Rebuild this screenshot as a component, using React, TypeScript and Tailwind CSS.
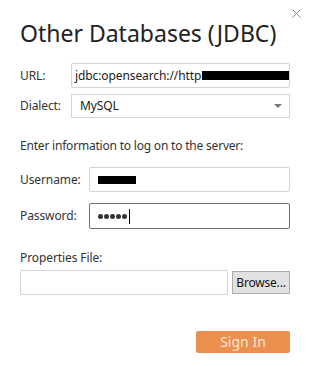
export default function App() {
  return (
    <div
      className="relative w-[311px] h-[366px] bg-white text-[#333333]"
      style={{ fontFamily: '"Noto Sans", "Open Sans", sans-serif' }}
    >
      {/* close button */}
      <button className="absolute right-[8px] top-[6px] w-[14px] h-[14px] flex items-center justify-center text-[#8a8a8a]">
        <svg width="9" height="9" viewBox="0 0 9 9">
          <path d="M0.5 0.5 L8.5 8.5 M8.5 0.5 L0.5 8.5" stroke="currentColor" strokeWidth="1" />
        </svg>
      </button>

      <div className="pl-[20px] pr-[21px] pt-[17px]">
        <h1 className="text-[23px] leading-[32px] text-[#222222] font-normal">
          Other Databases (JDBC)
        </h1>

        <div className="mt-[14px] flex items-center h-[25px] text-[12px] tracking-[-0.1px]">
          <span className="w-[51px]">URL:</span>
          <div className="flex-1 h-[25px] border border-[#d4d4d4] rounded-[2px] flex items-center pl-[3px] overflow-hidden whitespace-nowrap text-[#222]">
            <span>jdbc:opensearch://http</span>
            <span className="inline-block w-[90px] h-[9px] bg-black ml-[1px] shrink-0" />
          </div>
        </div>

        <div className="mt-[6px] flex items-center h-[24px] text-[12px] tracking-[-0.1px]">
          <span className="w-[51px]">Dialect:</span>
          <div className="flex-1 h-[24px] border border-[#d4d4d4] flex items-center pl-[8px] text-[#222]">
            <span className="flex-1">MySQL</span>
            <svg width="8" height="4" viewBox="0 0 8 4" className="mr-[7px]">
              <path d="M0 0 H8 L4 4 Z" fill="#777" />
            </svg>
          </div>
        </div>

        <p className="mt-[19px] text-[12px] leading-[18px] tracking-[-0.2px]">
          Enter information to log on to the server:
        </p>

        <div className="mt-[12px] flex items-center h-[25px] text-[12px] tracking-[-0.1px]">
          <span className="w-[69px]">Username:</span>
          <div className="flex-1 h-[25px] border border-[#d4d4d4] rounded-[2px] flex items-center pl-[8px]">
            <span className="inline-block w-[38px] h-[8px] bg-black" />
          </div>
        </div>

        <div className="mt-[11px] flex items-center h-[26px] text-[12px] tracking-[-0.1px]">
          <span className="w-[69px]">Password:</span>
          <div className="flex-1 h-[26px] border border-[#6f6f6f] rounded-[2px] flex items-center pl-[8px] gap-[1px]">
            <span className="w-[5px] h-[5px] rounded-full bg-[#333]" />
            <span className="w-[5px] h-[5px] rounded-full bg-[#333]" />
            <span className="w-[5px] h-[5px] rounded-full bg-[#333]" />
            <span className="w-[5px] h-[5px] rounded-full bg-[#333]" />
            <span className="w-[5px] h-[5px] rounded-full bg-[#333]" />
            <span className="w-[1px] h-[15px] bg-black ml-[1px]" />
          </div>
        </div>

        <p className="mt-[20px] text-[12px] leading-[18px] tracking-[-0.1px]">Properties File:</p>

        <div className="mt-[3px] flex items-center gap-[4px]">
          <div className="w-[208px] h-[25px] border border-[#d4d4d4] rounded-[2px]" />
          <button className="w-[58px] h-[23px] bg-[#e1e1e1] border border-[#adadad] text-[12px] tracking-[-0.2px] text-[#111] leading-none">
            Browse...
          </button>
        </div>

        <div className="mt-[36px] flex justify-end">
          <button className="w-[94px] h-[22px] bg-[#eb8f4f] rounded-[2px] text-[14px] text-[#fde6d3] leading-none">
            Sign In
          </button>
        </div>
      </div>
    </div>
  );
}
